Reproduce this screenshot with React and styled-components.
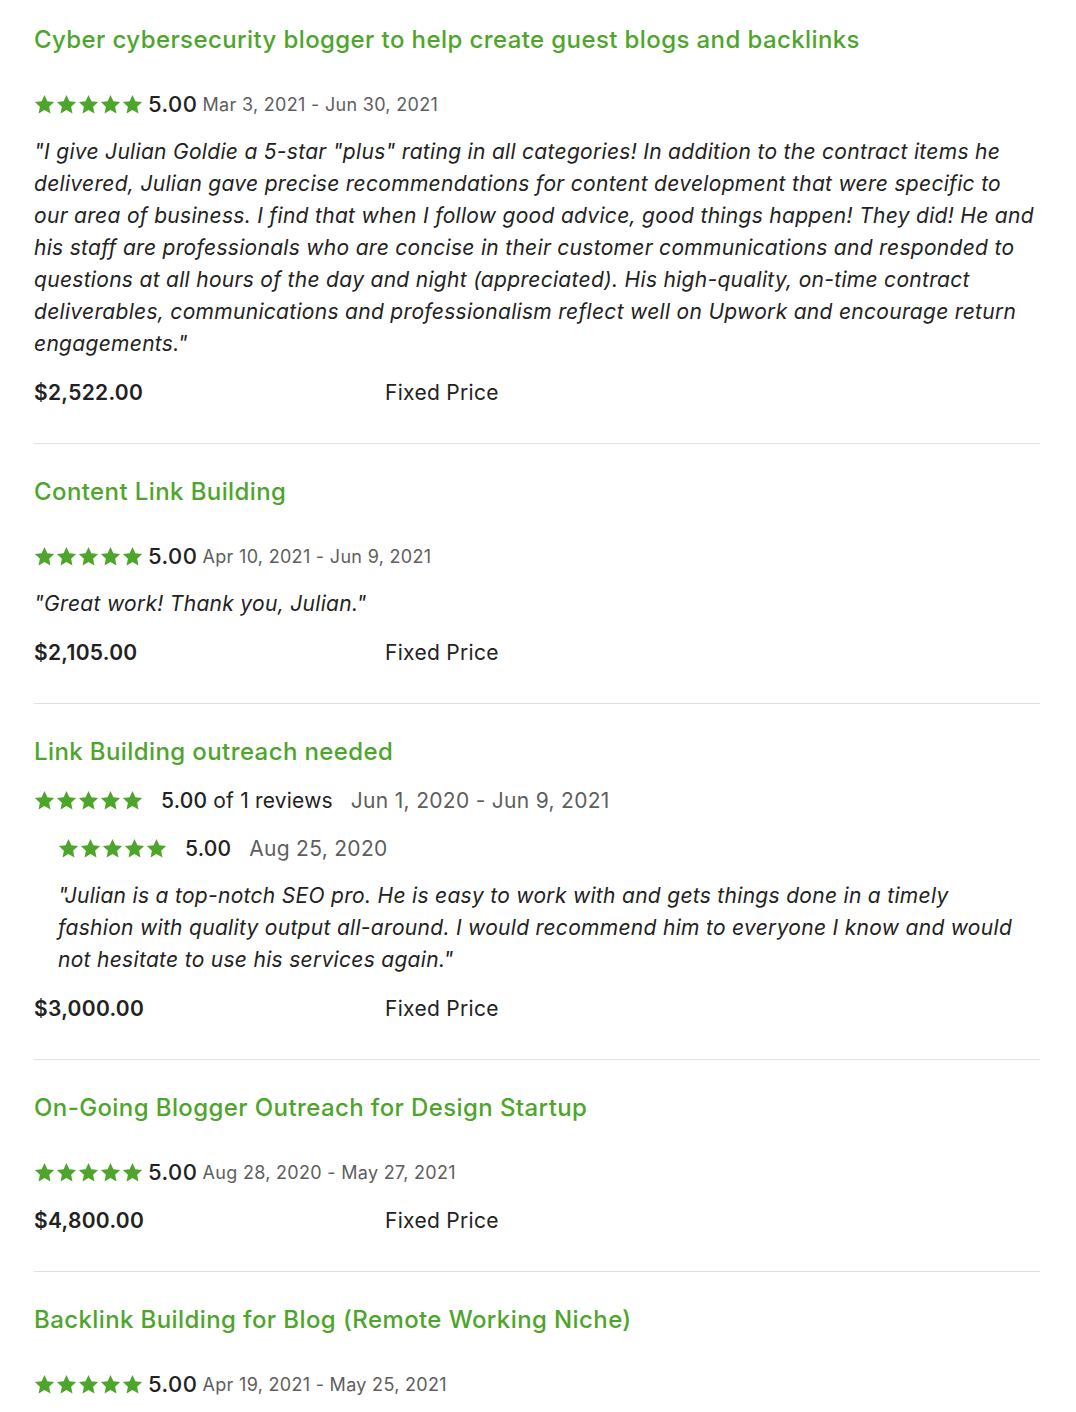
import React from 'react';
import styled, { createGlobalStyle } from 'styled-components';

const GlobalStyle = createGlobalStyle`
  body {
    margin: 0;
    background: #fff;
    font-family: Inter, 'Noto Sans', sans-serif;
    color: #222;
  }
`;

const Page = styled.div`
  padding: 24px 36px 0 34px;
`;

const Job = styled.section`
  display: flex;
  flex-direction: column;
  gap: 16px;
  padding-bottom: 35px;
  margin-bottom: 32px;
  border-bottom: 1px solid #e0e0e0;

  &:last-child {
    border-bottom: none;
  }
`;

const Title = styled.h3`
  margin: 0 0 ${(p) => (p.$tight ? 0 : 16)}px;
  font-size: 24px;
  line-height: 32px;
  font-weight: 500;
  letter-spacing: 0.4px;
  color: #4ea52c;
`;

const RatingRow = styled.div`
  display: flex;
  align-items: center;
  height: 32px;
  gap: ${(p) => (p.$wide ? 18 : 5)}px;
  margin-left: ${(p) => (p.$indent ? 24 : 0)}px;
`;

const Stars = styled.div`
  display: flex;
  gap: 1px;
  svg {
    width: 21px;
    height: 21px;
    display: block;
  }
`;

const Score = styled.span`
  font-size: ${(p) => (p.$large ? 21 : 22)}px;
  letter-spacing: ${(p) => (p.$large ? 0.2 : 0.5)}px;
  color: #222;
  white-space: nowrap;

  strong {
    font-weight: 500;
  }
`;

const Dates = styled.span`
  font-size: ${(p) => (p.$large ? 21 : 18)}px;
  letter-spacing: 0.3px;
  color: #5e5e5e;
  white-space: nowrap;
`;

const Quote = styled.p`
  margin: 0 ${(p) => (p.$indent ? 24 : 0)}px;
  font-size: 21px;
  letter-spacing: 0.3px;
  line-height: 32px;
  font-style: italic;
  color: #222;
`;

const PriceRow = styled.div`
  display: flex;
  align-items: center;
  height: 32px;
  font-size: 21px;
  letter-spacing: 0.3px;
`;

const Amount = styled.span`
  width: 351px;
  font-weight: 600;
  color: #222;
`;

const PriceType = styled.span`
  color: #222;
`;

const Star = () => (
  <svg viewBox="0 0 24 24">
    <path
      fill="#4ea52c"
      d="M12 1.2l3.3 7.1 7.7.9-5.7 5.3 1.5 7.7L12 18.4l-6.8 3.8 1.5-7.7L1 9.2l7.7-.9z"
    />
  </svg>
);

const StarRow = () => (
  <Stars>
    {[0, 1, 2, 3, 4].map((i) => (
      <Star key={i} />
    ))}
  </Stars>
);

const jobs = [
  {
    title: 'Cyber cybersecurity blogger to help create guest blogs and backlinks',
    dates: 'Mar 3, 2021 - Jun 30, 2021',
    quote:
      '"I give Julian Goldie a 5-star "plus" rating in all categories! In addition to the contract items he delivered, Julian gave precise recommendations for content development that were specific to our area of business. I find that when I follow good advice, good things happen! They did! He and his staff are professionals who are concise in their customer communications and responded to questions at all hours of the day and night (appreciated). His high-quality, on-time contract deliverables, communications and professionalism reflect well on Upwork and encourage return engagements."',
    amount: '$2,522.00',
  },
  {
    title: 'Content Link Building',
    dates: 'Apr 10, 2021 - Jun 9, 2021',
    quote: '"Great work! Thank you, Julian."',
    amount: '$2,105.00',
  },
  {
    title: 'Link Building outreach needed',
    dates: 'Jun 1, 2020 - Jun 9, 2021',
    multi: {
      reviews: 'of 1 reviews',
      date: 'Aug 25, 2020',
      quote:
        '"Julian is a top-notch SEO pro. He is easy to work with and gets things done in a timely fashion with quality output all-around. I would recommend him to everyone I know and would not hesitate to use his services again."',
    },
    amount: '$3,000.00',
  },
  {
    title: 'On-Going Blogger Outreach for Design Startup',
    dates: 'Aug 28, 2020 - May 27, 2021',
    amount: '$4,800.00',
  },
  {
    title: 'Backlink Building for Blog (Remote Working Niche)',
    dates: 'Apr 19, 2021 - May 25, 2021',
  },
];

export default function App() {
  return (
    <>
      <GlobalStyle />
      <Page>
        {jobs.map((job) => (
          <Job key={job.title}>
            <Title $tight={!!job.multi}>{job.title}</Title>
            {job.multi ? (
              <>
                <RatingRow $wide>
                  <StarRow />
                  <Score $large>
                    <strong>5.00</strong> {job.multi.reviews}
                  </Score>
                  <Dates $large>{job.dates}</Dates>
                </RatingRow>
                <RatingRow $wide $indent>
                  <StarRow />
                  <Score $large>
                    <strong>5.00</strong>
                  </Score>
                  <Dates $large>{job.multi.date}</Dates>
                </RatingRow>
                <Quote $indent>{job.multi.quote}</Quote>
              </>
            ) : (
              <>
                <RatingRow>
                  <StarRow />
                  <Score>
                    <strong>5.00</strong>
                  </Score>
                  <Dates>{job.dates}</Dates>
                </RatingRow>
                {job.quote && <Quote>{job.quote}</Quote>}
              </>
            )}
            {job.amount && (
              <PriceRow>
                <Amount>{job.amount}</Amount>
                <PriceType>Fixed Price</PriceType>
              </PriceRow>
            )}
          </Job>
        ))}
      </Page>
    </>
  );
}
